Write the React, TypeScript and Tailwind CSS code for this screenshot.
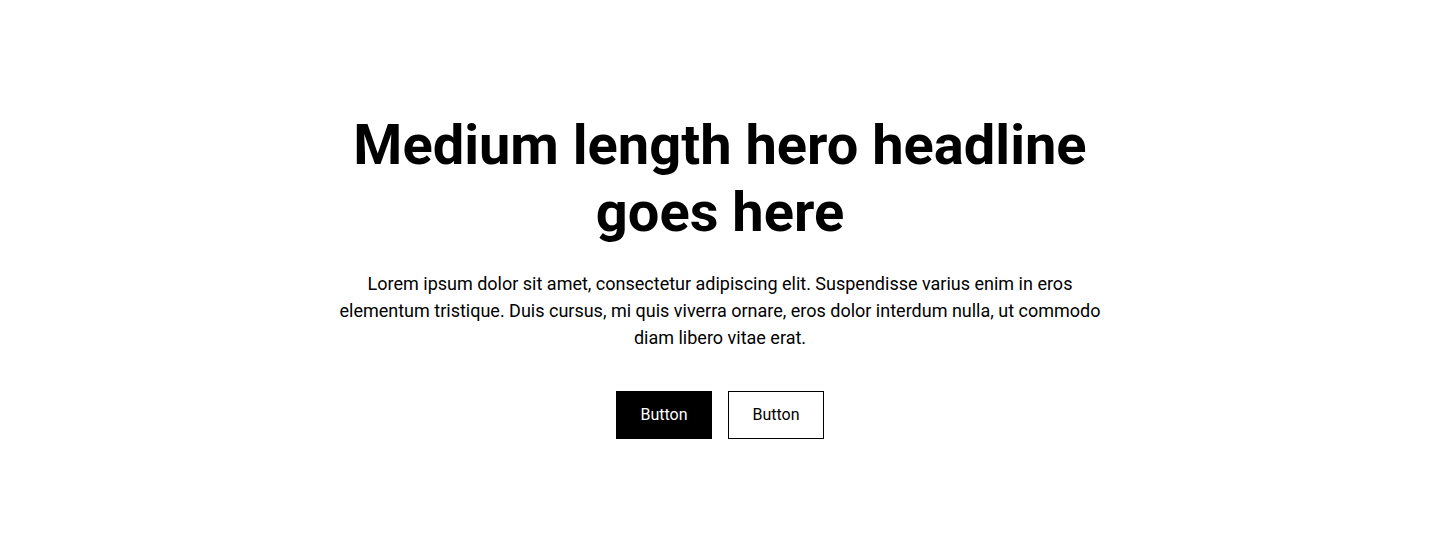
import React from "react";

export default function App() {
  return (
    <section
      className="bg-white px-[5%] py-28 text-black"
      style={{ fontFamily: "Roboto, 'Noto Sans', sans-serif" }}
    >
      <div className="mx-auto w-full max-w-3xl text-center">
        <h1 className="mb-6 text-[56px] font-bold leading-[1.2]">
          Medium length hero headline goes here
        </h1>
        <p className="text-[18px] leading-[1.5]">
          Lorem ipsum dolor sit amet, consectetur adipiscing elit. Suspendisse varius enim in eros
          elementum tristique. Duis cursus, mi quis viverra ornare, eros dolor interdum nulla, ut
          commodo diam libero vitae erat.
        </p>
        <div className="mt-10 flex items-center justify-center gap-4">
          <button className="flex h-12 w-24 items-center justify-center border border-black bg-black text-base leading-6 text-white">
            Button
          </button>
          <button className="flex h-12 w-24 items-center justify-center border border-black bg-white text-base leading-6 text-black">
            Button
          </button>
        </div>
      </div>
    </section>
  );
}
